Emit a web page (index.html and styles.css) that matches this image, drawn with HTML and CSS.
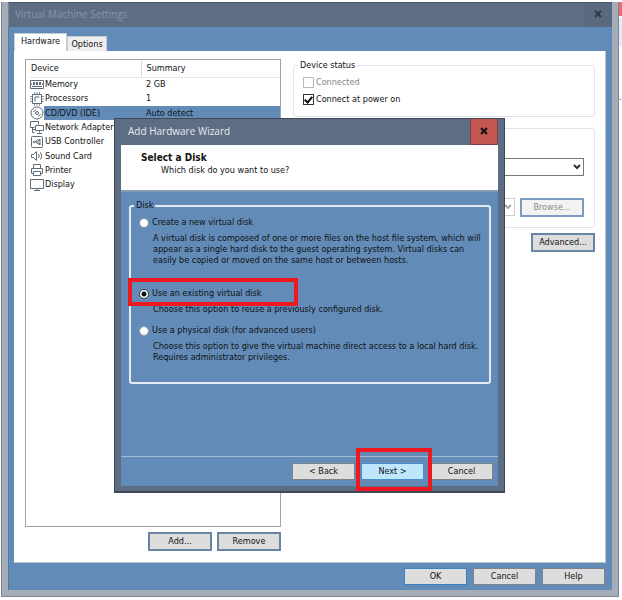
FILE: index.html
```html
<!DOCTYPE html>
<html lang="en">
<head>
    <meta charset="UTF-8">
    <meta name="viewport" content="width=device-width, initial-scale=1.0">
    <title>Virtual Machine Settings</title>
    <link rel="stylesheet" href="styles.css">
</head>
<body>
    <div class="window">
        <div class="title-bar">
            <h1>Virtual Machine Settings</h1>
            <button type="button" class="close" aria-label="Close settings">
                <svg width="8" height="8" viewBox="0 0 8 8"><path d="M1 1l6 6M7 1l-6 6"/></svg>
            </button>
        </div>

        <div class="window-body">
            <div class="tabs">
                <button type="button" class="tab active">Hardware</button>
                <button type="button" class="tab">Options</button>
            </div>

            <div class="panel">
                <!-- Device list -->
                <div class="devices">
                    <div class="device-list">
                        <table class="device-table">
                            <thead>
                                <tr><th>Device</th><th>Summary</th></tr>
                            </thead>
                            <tbody>
                                <tr>
                                    <td><div class="device"><svg class="icon" viewBox="0 0 14 14"><path d="M.5 2.500h13v3h-1v1h1v4H.5v-4h1v-1h-1zM2 8.500h10"/><path class="fill" d="M3 4h2v3H3zM6 4h2v3H6zM9 4h2v3H9z"/></svg><span>Memory</span></div></td>
                                    <td>2 GB</td>
                                </tr>
                                <tr>
                                    <td><div class="device"><svg class="icon" viewBox="0 0 14 14"><path d="M2.500 2.500h9v9h-9zM5 9.500V5h4.500"/><path class="pins" d="M4.500 0v2M7 0v2M9.500 0v2M4.500 12v2M7 12v2M9.500 12v2M0 4.500h2M0 7h2M0 9.500h2M12 4.500h2M12 7h2M12 9.500h2"/></svg><span>Processors</span></div></td>
                                    <td>1</td>
                                </tr>
                                <tr class="selected">
                                    <td><div class="device"><svg class="icon" viewBox="0 0 14 14"><circle cx="7" cy="7" r="6"/><circle cx="7" cy="7" r="1.500"/><path d="M3.500 6A4 4 0 0 1 6 3.500M10.500 8A4 4 0 0 1 8 10.500"/></svg><span>CD/DVD (IDE)</span></div></td>
                                    <td>Auto detect</td>
                                </tr>
                                <tr>
                                    <td><div class="device"><svg class="icon" viewBox="0 0 14 14"><path d="M4.500 6.500h-4v-6h8v3M2 8.500h3M5.500 4.500h8v5h-8zM9.500 9.500v2M7 12.500h5M2.500 6.500v5h2"/></svg><span>Network Adapter</span></div></td>
                                    <td></td>
                                </tr>
                                <tr>
                                    <td><div class="device"><svg class="icon" viewBox="0 0 14 14"><rect x="1.500" y="1.500" width="11" height="11" rx="1"/><path d="M4 7h7M5 7l2-2h2M6 7l2 2h1"/><path class="fill" d="M2.500 7l2-1.500v3zM9 4h1.500v2H9zM9 8h1.500v2H9z"/></svg><span>USB Controller</span></div></td>
                                    <td></td>
                                </tr>
                                <tr>
                                    <td><div class="device"><svg class="icon" viewBox="0 0 14 14"><path d="M1.500 5.500h2l3-3v9l-3-3h-2zM8.500 5q1.500 2 0 4M10.500 3.500q2.500 3.500 0 7"/></svg><span>Sound Card</span></div></td>
                                    <td></td>
                                </tr>
                                <tr>
                                    <td><div class="device"><svg class="icon" viewBox="0 0 14 14"><path d="M3.500 5.500v-4h7v4M3.500 10.500h-2v-5h11v5h-2M3.500 8.500h7v4h-7z"/></svg><span>Printer</span></div></td>
                                    <td></td>
                                </tr>
                                <tr>
                                    <td><div class="device"><svg class="icon" viewBox="0 0 14 14"><path d="M.5 1.500h13v9H.5zM4 12.500h6M7 10.500v2"/></svg><span>Display</span></div></td>
                                    <td></td>
                                </tr>
                            </tbody>
                        </table>
                    </div>
                    <div class="device-buttons">
                        <button type="button" class="btn outlined">Add...</button>
                        <button type="button" class="btn outlined">Remove</button>
                    </div>
                </div>

                <!-- Settings of the selected device -->
                <div class="settings">
                    <fieldset class="group status">
                        <legend>Device status</legend>
                        <label class="check disabled"><input type="checkbox" disabled>Connected</label>
                        <label class="check"><input type="checkbox" checked>Connect at power on</label>
                    </fieldset>
                    <fieldset class="group connection" aria-label="Connection">
                        <div class="select">
                            <select aria-label="Physical drive"><option></option></select>
                            <svg width="8" height="6" viewBox="0 0 8 6"><path d="M1 1l3 3 3-3"/></svg>
                        </div>
                        <div class="iso-row">
                            <div class="select disabled">
                                <select aria-label="ISO image file" disabled><option></option></select>
                                <svg width="8" height="6" viewBox="0 0 8 6"><path d="M1 1l3 3 3-3"/></svg>
                            </div>
                            <button type="button" class="btn outlined" disabled>Browse...</button>
                        </div>
                    </fieldset>
                    <button type="button" class="btn outlined advanced">Advanced...</button>
                </div>
            </div>

            <div class="window-buttons">
                <button type="button" class="btn default">OK</button>
                <button type="button" class="btn">Cancel</button>
                <button type="button" class="btn">Help</button>
            </div>
        </div>
    </div>

    <!-- Edge of the window behind -->
    <div class="behind">
        <div class="behind-close"></div>
        <div class="behind-bar"></div>
        <div class="behind-text">.</div>
    </div>

    <!-- Wizard dialog -->
    <div class="wizard" role="dialog" aria-labelledby="wizardTitle">
        <div class="wizard-title">
            <h2 id="wizardTitle">Add Hardware Wizard</h2>
            <button type="button" class="close" aria-label="Close wizard">
                <svg width="8" height="8" viewBox="0 0 8 8"><path d="M1 1l6 6M7 1l-6 6"/></svg>
            </button>
        </div>
        <div class="wizard-header">
            <h3>Select a Disk</h3>
            <p>Which disk do you want to use?</p>
        </div>
        <form class="wizard-body">
            <fieldset class="disk">
                <legend>Disk</legend>
                <div class="option">
                    <label><input type="radio" name="disk">Create a new virtual disk</label>
                    <p>A virtual disk is composed of one or more files on the host file system, which will<br>appear as a single hard disk to the guest operating system. Virtual disks can<br>easily be copied or moved on the same host or between hosts.</p>
                </div>
                <div class="option existing">
                    <label><input type="radio" name="disk" checked>Use an existing virtual disk</label>
                    <p>Choose this option to reuse a previously configured disk.</p>
                    <div class="marker"></div>
                </div>
                <div class="option">
                    <label><input type="radio" name="disk">Use a physical disk (for advanced users)</label>
                    <p>Choose this option to give the virtual machine direct access to a local hard disk.<br>Requires administrator privileges.</p>
                </div>
            </fieldset>
            <div class="wizard-buttons">
                <button type="button" class="btn">&lt; Back</button>
                <div class="next">
                    <button type="button" class="btn hot">Next &gt;</button>
                    <div class="marker"></div>
                </div>
                <button type="button" class="btn">Cancel</button>
            </div>
        </form>
    </div>
</body>
</html>
```

FILE: styles.css
```css
* {
    box-sizing: border-box;
}
body {
    font-family: 'DejaVu Sans Condensed', 'DejaVu Sans', sans-serif;
    font-size: 9px;
    line-height: 11px;
    color: #111;
    background-color: #fff;
    margin: 0;
    padding: 2px 0 3px 1px;
    min-height: 100vh;
    display: flex;
    position: relative;
}
h1, h2, h3, p {
    margin: 0;
}
button, select, input {
    font: inherit;
    color: inherit;
    margin: 0;
}
fieldset {
    margin: 0;
    min-width: 0;
}
svg {
    fill: none;
    stroke: currentColor;
    flex: none;
}

/* Main window */
.window {
    flex: 1;
    display: flex;
    flex-direction: column;
    border: 1px solid #7c858f;
    border-top: 0;
    box-shadow: inset 0 0 0 6px #a4adb7;
    padding: 0 6px 6px;
}
.title-bar {
    height: 25px;
    display: flex;
    align-items: center;
    justify-content: space-between;
    background-color: #5d6d83;
    border-left: 1px solid #7c858f;
    border-top: 1px solid #4a5668;
    padding-left: 6px;
    color: #8796a9;
}
.title-bar h1, .wizard-title h2 {
    font-family: 'Open Sans', sans-serif;
    font-size: 10px;
    line-height: 14px;
    padding-bottom: 2px;
    font-weight: 400;
}
.close {
    display: flex;
    align-items: center;
    justify-content: center;
    align-self: stretch;
    width: 28px;
    padding: 0 0 2px;
    border: 0;
    background: none;
}
.close svg {
    stroke-width: 2;
}
.title-bar .close {
    color: #303c4b;
    background-color: #5a697e;
}
.window-body {
    flex: 1;
    display: flex;
    flex-direction: column;
    background-color: #628bb8;
    border-left: 1px solid #5279a5;
    padding: 6px 6px 5px 5px;
}
.tabs {
    display: flex;
    align-items: flex-end;
    height: 18px;
}
.tab {
    height: 15px;
    padding: 0 3px;
    border: 1px solid #c4ccd6;
    border-bottom: 0;
    background-color: #eee;
    width: 40px;
}
.tab.active {
    height: 18px;
    width: 53px;
    background-color: #fff;
    padding: 0 5px 2px;
}
.panel {
    flex: 1;
    display: flex;
    gap: 12px;
    background-color: #fff;
    border-right: 1px solid #bcc3cb;
    border-bottom: 1px solid #bcc3cb;
    padding: 8px 10px 11px 11px;
}

/* Device list */
.devices {
    width: 256px;
    display: flex;
    flex-direction: column;
    gap: 5px;
}
.device-list {
    flex: 1;
    border: 1px solid #9ea5b0;
    padding-left: 4px;
}
.device-table {
    width: 100%;
    height: 132px;
    border-collapse: collapse;
}
.device-table th {
    height: 17px;
    padding: 0 0 0 1px;
    font-weight: 400;
    text-align: left;
    border-bottom: 1px solid #e2e5e9;
}
.device-table th:first-child {
    width: 111px;
    border-right: 1px solid #d8dce1;
}
.device-table td {
    padding: 0 0 0 5px;
}
.device-table td:first-child {
    padding: 0;
}
.device-table th:last-child {
    padding-left: 5px;
}
.device {
    display: flex;
    align-items: center;
    gap: 1px;
    white-space: nowrap;
}
.icon {
    width: 14px;
    height: 14px;
    color: #5c6b78;
}
.icon .fill {
    fill: currentColor;
    stroke: none;
}
.icon .pins {
    stroke: #8a959f;
}
.selected {
    background: linear-gradient(to right, #fff 14px, #628bb8 14px);
}
.device-buttons {
    display: flex;
    justify-content: flex-end;
    gap: 5px;
}

/* Buttons */
.btn {
    width: 63px;
    height: 17px;
    padding: 0;
    border: 1px solid #7c838b;
    background-color: #ddd;
    text-align: center;
}
.btn.outlined {
    width: 64px;
    height: 19px;
    border: 2px solid #6883a3;
    outline: 0;
}
.btn.default {
    border-color: #3d83c2;
}
.btn.hot {
    background-color: #bee6fd;
    border-color: #4a90c8;
}
.btn:disabled {
    color: #8b8b8b;
    background-color: #f3f3f3;
}
.btn.outlined:disabled {
    border-color: #7b9cc1;
}
.window-buttons {
    display: flex;
    justify-content: flex-end;
    gap: 6px;
    padding: 5px 1px 0 0;
}

/* Device settings */
.settings {
    flex: 1;
    display: flex;
    flex-direction: column;
    padding-top: 1px;
}
.group {
    border: 1px solid #dbe4ed;
    border-radius: 3px;
    padding: 0 10px 0 9px;
}
.group legend {
    padding: 0 2px;
    margin-left: -5px;
}
.status {
    height: 57px;
    padding-top: 3px;
}
.check {
    display: flex;
    align-items: center;
    gap: 2px;
    height: 17px;
}
.check.disabled {
    color: #858585;
}
.check input {
    appearance: none;
    width: 11px;
    height: 11px;
    border: 1px solid #333;
    background-color: #fff;
    display: flex;
    justify-content: center;
}
.check input:disabled {
    border-color: #bbb;
}
.check input:checked::after {
    content: '';
    width: 3px;
    height: 6px;
    border: solid #111;
    border-width: 0 2px 2px 0;
    transform: rotate(40deg);
}
.connection {
    height: 100px;
    margin-top: 11px;
    padding-top: 29px;
}
.select {
    position: relative;
    display: flex;
    flex: 1;
}
.select select {
    appearance: none;
    flex: 1;
    height: 18px;
    border: 1px solid #777;
    border-radius: 0;
    background-color: #fff;
}
.select svg {
    position: absolute;
    right: 3px;
    top: 6px;
    stroke-width: 2;
    color: #333;
    pointer-events: none;
}
.select.disabled select {
    border-color: #bbb;
}
.select.disabled svg {
    color: #aaa;
}
.iso-row {
    display: flex;
    gap: 5px;
    margin-top: 22px;
}
.advanced {
    align-self: flex-end;
    margin-top: 5px;
}

/* Window behind, at the right edge */
.behind {
    width: 3px;
    overflow: hidden;
}
.behind-close {
    height: 14px;
    background-color: #f0696e;
}
.behind-bar {
    height: 28px;
    margin-top: 2px;
    background-color: #e0ecfa;
}
.behind-text {
    margin-top: 46px;
}

/* Wizard */
.wizard {
    position: absolute;
    top: 118px;
    left: 114px;
    right: 117px;
    height: 375px;
    display: flex;
    flex-direction: column;
    background-color: #5d6d83;
    border: 1px solid #3e4857;
    border-bottom-width: 2px;
    padding: 0 6px 5px;
}
.wizard-title {
    height: 26px;
    display: flex;
    align-items: center;
    justify-content: space-between;
    padding-left: 7px;
    color: #e6eaef;
}
.wizard-title .close {
    color: #111;
    background-color: #c1574e;
    border: 1px solid #7d4149;
    border-top: 0;
}
.wizard-header {
    height: 47px;
    background-color: #fff;
    border-bottom: 2px solid #869bb4;
    padding: 6px 20px;
}
.wizard-header h3 {
    font-size: 10px;
    line-height: 13px;
}
.wizard-header p {
    padding-left: 20px;
    line-height: 13px;
}
.wizard-body {
    flex: 1;
    display: flex;
    flex-direction: column;
    justify-content: space-between;
    background-color: #628bb8;
    padding-top: 8px;
}
.disk {
    height: 184px;
    margin: 0 7px 0 8px;
    border: 2px solid #e3eaf2;
    border-radius: 3px;
    padding: 1px 8px 0;
}
.disk legend {
    padding: 0 2px;
    margin-left: -5px;
}
.option label {
    display: flex;
    align-items: center;
    gap: 3px;
    height: 21px;
}
.option input {
    appearance: none;
    width: 10px;
    height: 10px;
    border-radius: 50%;
    border: 1px solid #8a96a4;
    background-color: #fff;
}
.option input:checked {
    border-color: #444;
    background: radial-gradient(circle, #111 2px, #fff 3px);
}
.option p {
    padding-left: 14px;
    white-space: nowrap;
}
.option.existing {
    position: relative;
    padding-top: 17px;
    padding-bottom: 5px;
}
.marker {
    position: absolute;
    border: 4px solid #f01820;
    pointer-events: none;
}
.existing .marker {
    left: -11px;
    top: 12px;
    width: 170px;
    height: 28px;
}
.wizard-buttons {
    display: flex;
    justify-content: flex-end;
    gap: 6px;
    border-top: 1px solid #a3bbd4;
    padding: 6px 5px 6px 0;
}
.next {
    position: relative;
}
.next .marker {
    left: -5px;
    top: -15px;
    width: 76px;
    height: 43px;
}
```
